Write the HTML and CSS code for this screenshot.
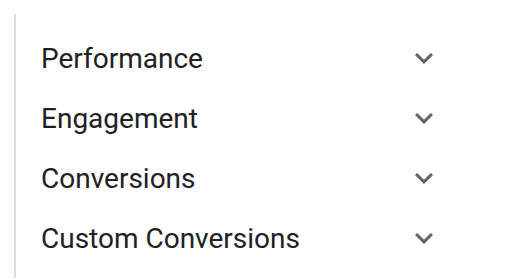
FILE: index.html
```html
<!DOCTYPE html>
<html lang="en">

<head>
    <meta charset="UTF-8">
    <meta name="viewport" content="width=device-width, initial-scale=1.0">
    <title>Metrics</title>
    <link rel="stylesheet" href="styles.css">
</head>

<body>
    <div class="panel">
        <div class="row">
            <span>Performance</span>
            <svg class="chevron" viewBox="0 0 24 24"><path d="M16.59 8.59L12 13.17 7.41 8.59 6 10l6 6 6-6z"/></svg>
        </div>
        <div class="row">
            <span>Engagement</span>
            <svg class="chevron" viewBox="0 0 24 24"><path d="M16.59 8.59L12 13.17 7.41 8.59 6 10l6 6 6-6z"/></svg>
        </div>
        <div class="row">
            <span>Conversions</span>
            <svg class="chevron" viewBox="0 0 24 24"><path d="M16.59 8.59L12 13.17 7.41 8.59 6 10l6 6 6-6z"/></svg>
        </div>
        <div class="row">
            <span>Custom Conversions</span>
            <svg class="chevron" viewBox="0 0 24 24"><path d="M16.59 8.59L12 13.17 7.41 8.59 6 10l6 6 6-6z"/></svg>
        </div>
    </div>
</body>
</html>
```

FILE: styles.css
```css
body {
    font-family: Roboto, 'Liberation Sans', sans-serif;
    background-color: #fff;
    margin: 0;
}

.panel {
    margin: 14px 0 0 14px;
    border-left: 2px solid #dadce0;
    padding: 14px 0 0 25px;
    height: 264px;
    box-sizing: border-box;
}

.row {
    display: flex;
    align-items: center;
    justify-content: space-between;
    width: 401px;
    height: 60px;
    font-size: 28px;
    color: #202124;
}

.chevron {
    width: 36px;
    height: 36px;
    fill: #5f6368;
}
```
